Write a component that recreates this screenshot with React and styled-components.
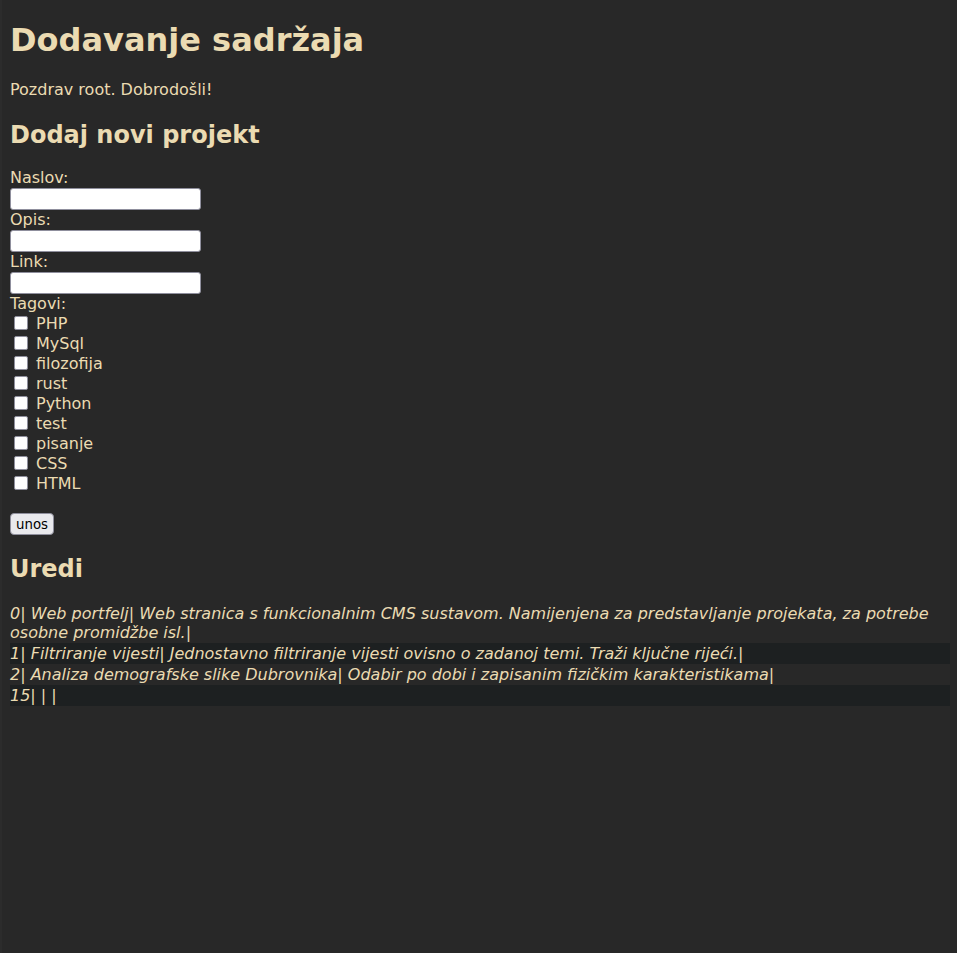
import React from "react";
import styled, { createGlobalStyle } from "styled-components";

const GlobalStyle = createGlobalStyle`
  html, body {
    margin: 0;
    padding: 0;
    background: #282828;
  }
  body {
    color: #ebdbb2;
    font-family: "DejaVu Sans", sans-serif;
    font-size: 16px;
  }
`;

const Page = styled.div`
  min-height: 100vh;
  box-sizing: border-box;
  border-left: 2px solid #2c2c2c;
  padding: 1px 7px 0 8px;
`;

const Title = styled.h1`
  font-size: 32px;
  font-weight: bold;
  margin: 20px 0 21.44px;
`;

const Greeting = styled.p`
  margin: 21.44px 0;
`;

const SectionTitle = styled.h2`
  font-size: 24px;
  font-weight: bold;
  margin: 19.92px 0;
`;

const Form = styled.form`
  margin: 0;
`;

const FieldLabel = styled.label`
  display: block;
  line-height: 18.6px;
`;

const FieldLine = styled.div`
  padding: 0.7px 0;
`;

const TextInput = styled.input`
  display: block;
  box-sizing: border-box;
  width: 191px;
  height: 22px;
  margin: 0;
  padding: 1px 3px;
  border: 1px solid #8f8f9d;
  border-radius: 3px;
  background: #ffffff;
  font: 13.33px "DejaVu Sans", sans-serif;
`;

const TagList = styled.div``;

const TagRow = styled.label`
  display: flex;
  align-items: center;
  height: 20px;
`;

const Checkbox = styled.input`
  appearance: none;
  box-sizing: border-box;
  flex: none;
  width: 14px;
  height: 14px;
  margin: 0 8px 0 4px;
  background: #ffffff;
  border: 1px solid #8f8f9d;
  border-radius: 2px;
`;

const SubmitLine = styled.div`
  display: flex;
  margin-top: 20px;
  margin-bottom: 1.5px;
`;

const SubmitButton = styled.button`
  box-sizing: border-box;
  font: 13.33px "DejaVu Sans", sans-serif;
  color: #000;
  background: #e9e9ed;
  border: 1px solid #8f8f9d;
  border-radius: 4px;
  padding: 0 5px;
  height: 22px;
`;

const ProjectList = styled.div``;

const ProjectRow = styled.div`
  font-style: italic;
  padding: 1px 0;
  background: ${(p) => (p.$striped ? "#1d2021" : "transparent")};
`;

const tags = ["PHP", "MySql", "filozofija", "rust", "Python", "test", "pisanje", "CSS", "HTML"];

const projects = [
  {
    id: 0,
    title: "Web portfelj",
    desc: "Web stranica s funkcionalnim CMS sustavom. Namijenjena za predstavljanje projekata, za potrebe osobne promidžbe isl.",
  },
  {
    id: 1,
    title: "Filtriranje vijesti",
    desc: "Jednostavno filtriranje vijesti ovisno o zadanoj temi. Traži ključne rijeći.",
  },
  {
    id: 2,
    title: "Analiza demografske slike Dubrovnika",
    desc: "Odabir po dobi i zapisanim fizičkim karakteristikama",
  },
  { id: 15, title: "", desc: "" },
];

export default function App() {
  return (
    <>
      <GlobalStyle />
      <Page>
        <Title>Dodavanje sadržaja</Title>
        <Greeting>Pozdrav root. Dobrodošli!</Greeting>
        <SectionTitle>Dodaj novi projekt</SectionTitle>
        <Form onSubmit={(e) => e.preventDefault()}>
          <FieldLabel htmlFor="naslov">Naslov:</FieldLabel>
          <FieldLine>
            <TextInput id="naslov" type="text" />
          </FieldLine>
          <FieldLabel htmlFor="opis">Opis:</FieldLabel>
          <FieldLine>
            <TextInput id="opis" type="text" />
          </FieldLine>
          <FieldLabel htmlFor="link">Link:</FieldLabel>
          <FieldLine>
            <TextInput id="link" type="text" />
          </FieldLine>
          <FieldLabel as="div">Tagovi:</FieldLabel>
          <TagList>
            {tags.map((t) => (
              <TagRow key={t}>
                <Checkbox type="checkbox" />
                {t}
              </TagRow>
            ))}
          </TagList>
          <SubmitLine>
            <SubmitButton type="submit">unos</SubmitButton>
          </SubmitLine>
        </Form>
        <SectionTitle>Uredi</SectionTitle>
        <ProjectList>
          {projects.map((p, i) => (
            <ProjectRow key={p.id} $striped={i % 2 === 1}>
              {p.id}| {p.title}| {p.desc}|
            </ProjectRow>
          ))}
        </ProjectList>
      </Page>
    </>
  );
}
